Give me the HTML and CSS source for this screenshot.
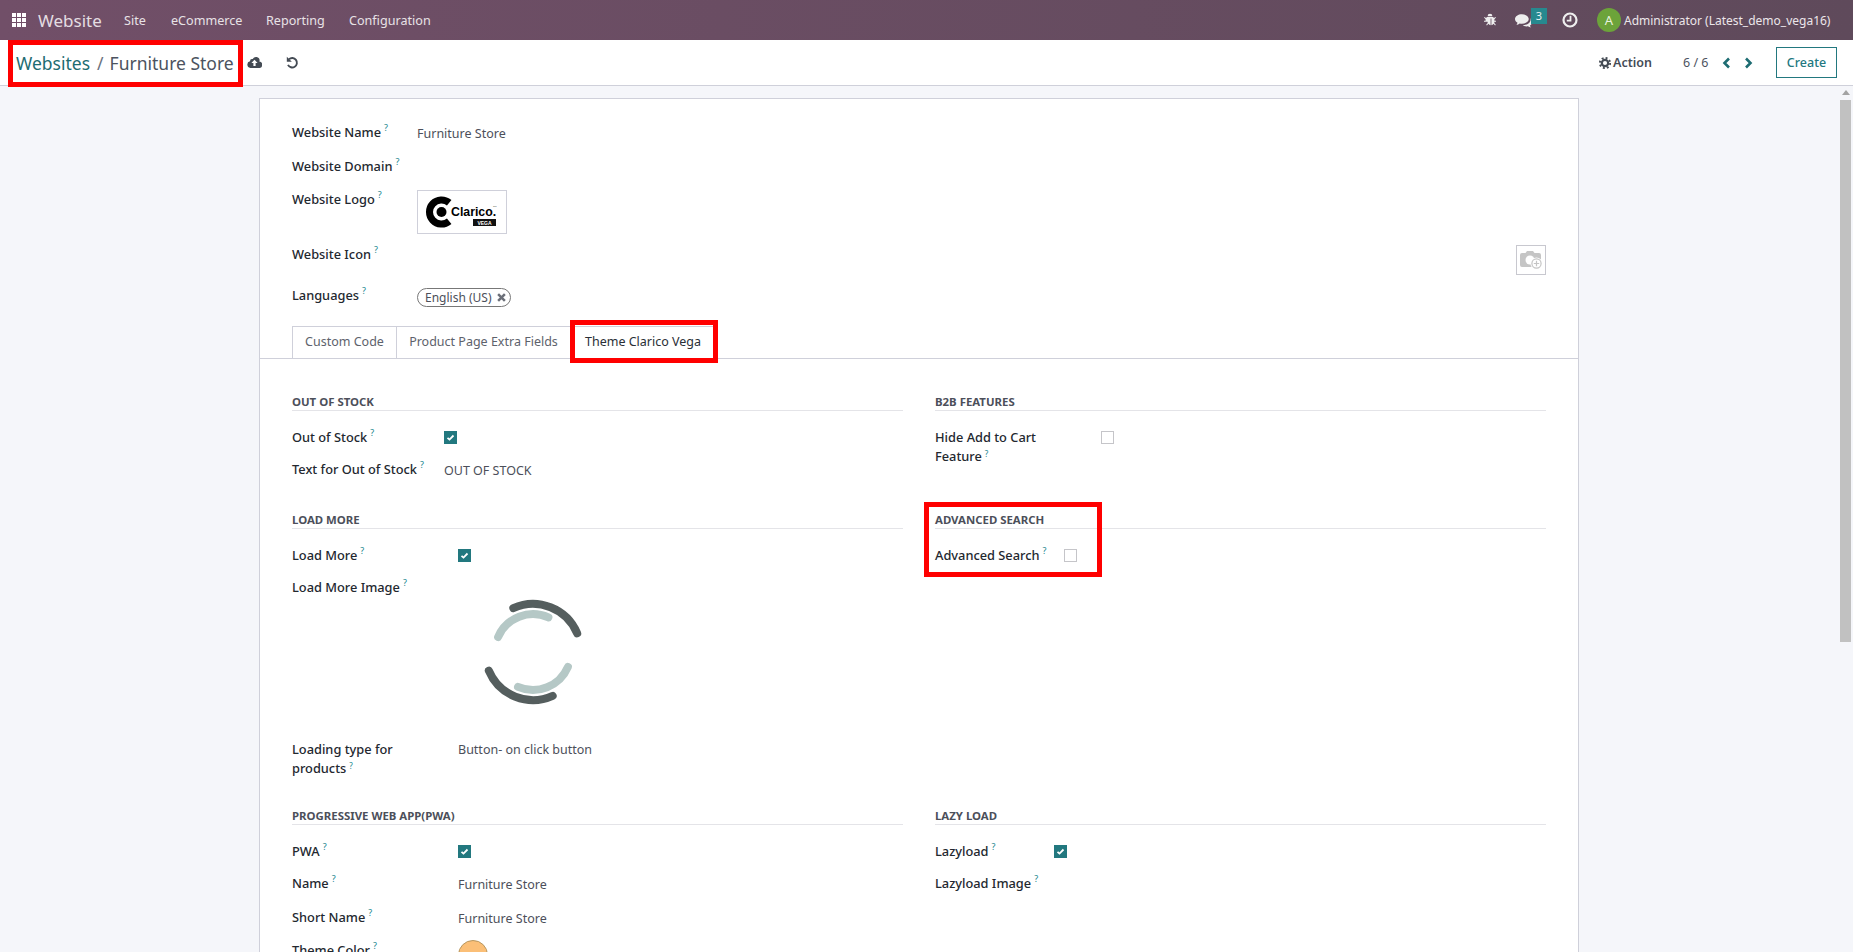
FILE: index.html
```html
<!DOCTYPE html>
<html lang="en">
<head>
<meta charset="utf-8">
<title>Website</title>
<link rel="stylesheet" href="styles.css">
</head>
<body>
<header class="nav">
  <div class="nav-left">
    <svg class="apps" viewBox="0 0 14 14"><g fill="#fff"><rect width="4" height="4"/><rect x="5" width="4" height="4"/><rect x="10" width="4" height="4"/><rect y="5" width="4" height="4"/><rect x="5" y="5" width="4" height="4"/><rect x="10" y="5" width="4" height="4"/><rect y="10" width="4" height="4"/><rect x="5" y="10" width="4" height="4"/><rect x="10" y="10" width="4" height="4"/></g></svg>
    <span class="brand">Website</span>
    <span class="menu m1">Site</span>
    <span class="menu m2">eCommerce</span>
    <span class="menu m3">Reporting</span>
    <span class="menu m4">Configuration</span>
  </div>
  <div class="nav-right">
    <svg class="bug" viewBox="0 0 12 14"><path fill="#eee" d="M3.6 3.2a2.4 2.4 0 0 1 4.8 0zM3 3.9h6l1 1.2 1.3-1.2.7.7-1.6 1.6v1.6H12v1h-1.6l-.1 1.2 1.5 1.7-.7.7-1.5-1.6c-.6.8-1.4 1.3-2.2 1.4V5.6h-.8v6.6c-.8-.1-1.6-.6-2.2-1.4l-1.5 1.6-.7-.7 1.5-1.7-.1-1.2H0v-1h1.6V6.2L0 4.6l.7-.7L2 5.1z"/></svg>
    <svg class="chat" viewBox="0 0 17 14"><path fill="#eee" d="M6.5 1C3 1 0 3 0 5.6c0 1.5 1 2.8 2.4 3.6-.2.7-.6 1.3-1 1.8 1 0 2.2-.6 3-1.2.7.1 1.4.2 2.1.2 3.6 0 6.5-2 6.5-4.4S10.100 1 6.500 1z"/><path fill="#eee" d="M14.500 4.600c.2.500.3 1 .3 1.500 0 3-3 5.100-6.800 5.100h-.7c.9.900 2.300 1.400 3.700 1.400.5 0 1 0 1.400-.1.700.5 1.700 1 2.600 1-.4-.4-.7-1-.9-1.500 1.100-.7 1.900-1.800 1.900-3 0-1.800-.6-3.300-1.500-4.400z"/></svg>
    <span class="badge">3</span>
    <svg class="clock" viewBox="0 0 16 16"><circle cx="8" cy="8" r="6.500" fill="none" stroke="#eee" stroke-width="2.200"/><path d="M8.500 3.800v4.900H4.800" fill="none" stroke="#eee" stroke-width="1.800"/></svg>
    <span class="avatar">A</span>
    <span class="user">Administrator (Latest_demo_vega16)</span>
  </div>
</header>

<section class="panel">
  <div class="crumbs">
    <span class="crumb-link">Websites</span><span class="crumb-sep">/</span><span class="crumb-cur">Furniture Store</span>
    <svg class="cloud" viewBox="0 0 15 11"><path fill="#444b54" d="M12.300 4.600A3.300 3.300 0 0 0 9 0a3.700 3.700 0 0 0-3.300 2A2.300 2.300 0 0 0 3 4.300 3.400 3.400 0 0 0 3.400 11h8.400a3.200 3.200 0 0 0 .5-6.400z"/><path fill="#fff" d="M7.500 2.800 10.600 6H8.600v3H6.400V6H4.400z"/></svg>
    <svg class="undo" viewBox="0 0 13 13"><path d="M3 3.300A4.700 4.700 0 1 1 2 8.800" fill="none" stroke="#444b54" stroke-width="1.900"/><path fill="#444b54" d="M.8.800v5h5z"/></svg>
  </div>
  <div class="panel-right">
    <svg class="gear" viewBox="0 0 14 14"><circle cx="7" cy="7" r="3.700" fill="none" stroke="#444b54" stroke-width="2.600"/><circle cx="7" cy="7" r="6" fill="none" stroke="#444b54" stroke-width="2.200" stroke-dasharray="2.300 2.410"/></svg>
    <span class="action">Action</span>
    <span class="pager">6 / 6</span>
    <svg class="chev c1" viewBox="0 0 9 12"><path d="M7 1.500 2.500 6 7 10.500" fill="none" stroke="#1d6c72" stroke-width="2.600"/></svg>
    <svg class="chev c2" viewBox="0 0 9 12"><path d="M2 1.500 6.500 6 2 10.500" fill="none" stroke="#1d6c72" stroke-width="2.600"/></svg>
    <span class="create">Create</span>
  </div>
</section>

<div class="body-row">
  <main class="content">
    <article class="sheet">
      <div class="head-form">
        <div class="lbl">Website Name<sup>?</sup></div><div class="val">Furniture Store</div>
        <div class="lbl">Website Domain<sup>?</sup></div><div></div>
        <div class="lbl">Website Logo<sup>?</sup></div>
        <div class="logo-box">
          <svg class="logo" viewBox="0 0 76 36">
            <path d="M25.200 8.800A12 12 0 1 0 25.200 27.200" fill="none" stroke="#000" stroke-width="7"/>
            <circle cx="17.500" cy="18" r="5" fill="#000"/>
            <text x="27" y="21.500" class="logo-text">Clarico.</text>
            <text x="69" y="13" class="logo-tm">TM</text>
            <rect x="49" y="25" width="23" height="7" fill="#111"/>
            <text x="60.500" y="30.700" text-anchor="middle" class="logo-vega">VEGA</text>
          </svg>
        </div>
        <div class="lbl">Website Icon<sup>?</sup></div>
        <div class="icon-cell">
          <span class="cam-box">
            <svg class="cam" viewBox="0 0 24 20"><path fill="#c5c5c5" d="M8 1h6l1.500 2H20a2 2 0 0 1 2 2v10a2 2 0 0 1-2 2H3a2 2 0 0 1-2-2V5a2 2 0 0 1 2-2h3.500z"/><circle cx="11" cy="10" r="4.500" fill="#fff"/><circle cx="17.500" cy="13.500" r="6" fill="#fff"/><circle cx="17.500" cy="13.500" r="4.600" fill="none" stroke="#c5c5c5" stroke-width="1.200"/><path d="M17.500 10.800v5.400M14.800 13.500h5.400" stroke="#c5c5c5" stroke-width="1.200"/></svg>
          </span>
        </div>
        <div class="lbl">Languages<sup>?</sup></div>
        <div><span class="tag">English (US)<svg class="tag-x" viewBox="0 0 8 8"><path d="M1 1l6 6M7 1 1 7" stroke="#6b6f78" stroke-width="2.200"/></svg></span></div>
      </div>

      <nav class="tabs">
        <span class="tab t1">Custom Code</span>
        <span class="tab t2">Product Page Extra Fields</span>
        <span class="tab t3">Theme Clarico Vega</span>
      </nav>

      <div class="groups">
        <section class="group g1">
          <h3>OUT OF STOCK</h3>
          <div class="form c152">
            <div class="lbl">Out of Stock<sup>?</sup></div><div class="cell"><span class="cb on"><svg viewBox="0 0 13 13"><path d="M3.500 6.800 5.500 8.600 9.500 4.500" fill="none" stroke="#fff" stroke-width="1.800"/></svg></span></div>
            <div class="lbl">Text for Out of Stock<sup>?</sup></div><div class="val">OUT OF STOCK</div>
          </div>
        </section>
        <section class="group g1">
          <h3>B2B FEATURES</h3>
          <div class="form c166">
            <div class="lbl lbl-wrap lbl-narrow">Hide Add to Cart Feature<sup>?</sup></div><div class="cell"><span class="cb"></span></div>
          </div>
        </section>

        <section class="group g2">
          <h3>LOAD MORE</h3>
          <div class="form c166">
            <div class="lbl">Load More<sup>?</sup></div><div class="cell"><span class="cb on"><svg viewBox="0 0 13 13"><path d="M3.500 6.800 5.500 8.600 9.500 4.500" fill="none" stroke="#fff" stroke-width="1.800"/></svg></span></div>
            <div class="lbl">Load More Image<sup>?</sup></div>
            <div class="spin-cell">
              <svg class="spin" viewBox="0 0 150 150">
                <g fill="none" stroke-width="8" stroke-linecap="round">
                  <path stroke="#b5c8c6" d="M40.100 60A38 38 0 0 1 90.400 40.300"/>
                  <path stroke="#b5c8c6" d="M109.900 90A38 38 0 0 1 60 109.900"/>
                  <path stroke="#555e5e" d="M55.300 31.200A48 48 0 0 1 119.200 56.400"/>
                  <path stroke="#555e5e" d="M30.800 93.600A48 48 0 0 0 94.700 118.800"/>
                </g>
              </svg>
            </div>
            <div class="lbl lbl-wrap lbl-narrow">Loading type for products<sup>?</sup></div><div class="val val-tight">Button- on click button</div>
          </div>
        </section>
        <section class="group g2">
          <h3>ADVANCED SEARCH</h3>
          <div class="form c129">
            <div class="lbl">Advanced Search<sup>?</sup></div><div class="cell"><span class="cb"></span></div>
          </div>
        </section>

        <section class="group">
          <h3>PROGRESSIVE WEB APP(PWA)</h3>
          <div class="form c166">
            <div class="lbl">PWA<sup>?</sup></div><div class="cell"><span class="cb on"><svg viewBox="0 0 13 13"><path d="M3.500 6.800 5.500 8.600 9.500 4.500" fill="none" stroke="#fff" stroke-width="1.800"/></svg></span></div>
            <div class="lbl">Name<sup>?</sup></div><div class="val">Furniture Store</div>
            <div class="lbl">Short Name<sup>?</sup></div><div class="val">Furniture Store</div>
            <div class="lbl">Theme Color<sup>?</sup></div><div><span class="swatch"></span></div>
          </div>
        </section>
        <section class="group">
          <h3>LAZY LOAD</h3>
          <div class="form c119">
            <div class="lbl">Lazyload<sup>?</sup></div><div class="cell"><span class="cb on"><svg viewBox="0 0 13 13"><path d="M3.500 6.800 5.500 8.600 9.500 4.500" fill="none" stroke="#fff" stroke-width="1.800"/></svg></span></div>
            <div class="lbl">Lazyload Image<sup>?</sup></div><div></div>
          </div>
        </section>
      </div>
    </article>
  </main>
  <aside class="scroll"><span class="arrow"></span><span class="thumb"></span></aside>
</div>

<div class="mark mark-crumb"></div>
<div class="mark mark-tab"></div>
<div class="mark mark-search"></div>
</body>
</html>
```
FILE: styles.css
```css
* { box-sizing: border-box; }
html, body { margin: 0; height: 100%; }
body {
  width: 1853px; height: 952px; overflow: hidden; position: relative;
  font-family: "Noto Sans", "Open Sans", sans-serif; font-size: 12.500px; color: #4c4f5a;
  background: #f5f6fa; display: flex; flex-direction: column;
}
.nav {
  height: 40px; flex: none; display: flex; justify-content: space-between; align-items: center;
  background: linear-gradient(90deg, #714f68, #5f4a5b); color: #ece6ea; position: relative;
}
.nav-left { display: flex; align-items: center; }
.apps { width: 14px; height: 14px; margin-left: 12px; }
.brand { font-size: 17px; margin-left: 12px; width: 86px; color: #e4dde2; }
.menu { font-size: 12.600px; color: #e8e2e6; }
.m1 { width: 47px; } .m2 { width: 95px; } .m3 { width: 83px; }
.nav-right { display: flex; align-items: center; }
.bug { width: 12px; height: 14px; margin-right: 18px; }
.chat { width: 18px; height: 15px; margin-left: 1px; }
.badge { width: 16px; height: 16px; background: #27898f; color: #e8f2f2; font-size: 11px; line-height: 15px; text-align: center; align-self: flex-start; margin: 0 0 0 -2px; }
.clock { width: 16px; height: 16px; margin: 0 19px 0 15px; }
.avatar { width: 24px; height: 24px; border-radius: 50%; background: #6ca33a; color: #e9f2df; text-align: center; line-height: 24px; font-size: 13px; }
.user { margin: 0 10px 0 3px; font-size: 12px; width: 219px; white-space: nowrap; }

.panel {
  height: 46px; flex: none; background: #fff; border-bottom: 1px solid #cfd0da;
  display: flex; justify-content: space-between; align-items: center;
}
.crumbs { display: flex; align-items: center; padding-left: 16px; font-size: 17.500px; white-space: nowrap; }
.crumb-link { color: #1d6c72; }
.crumb-sep { margin: 0 6px 0 7px; color: #6b7280; }
.crumb-cur { color: #4c5360; }
.cloud { width: 15px; height: 11px; margin-left: 13px; }
.undo { width: 13px; height: 13px; margin-left: 24px; }
.panel-right { display: flex; align-items: center; padding-right: 16px; }
.gear { width: 12px; height: 12px; }
.action { font-weight: 600; margin-left: 2px; width: 70px; color: #454c56; }
.pager { width: 39px; color: #4c5360; }
.chev { width: 9px; height: 12px; }
.c1 { margin-right: 13px; }
.c2 { margin-right: 23px; }
.create { width: 61px; height: 31px; border: 1px solid #22787f; color: #22787f; text-align: center; line-height: 29px; font-weight: 500; }

.body-row { flex: 1; min-height: 0; display: flex; }
.content { flex: 1; min-width: 0; overflow: hidden; padding: 12px 0 0 259px; }
.sheet { width: 1320px; height: 1200px; background: #fff; border: 1px solid #cfd0da; padding-top: 23px; }
.scroll { width: 15px; flex: none; display: flex; flex-direction: column; align-items: center; padding: 4px 0 0; }
.arrow { width: 0; height: 0; border: 4px solid transparent; border-top: 0; border-bottom: 5px solid #a3a3a3; }
.thumb { width: 11px; height: 542px; background: #c1c1c1; margin-top: 5px; }

.head-form { display: grid; grid-template-columns: 125px 1fr; grid-template-rows: 34px 33px 55px 41px 41px; padding: 0 32px; }
.lbl { font-weight: 500; font-size: 12.800px; color: #23282f; line-height: 20px; white-space: nowrap; }
.lbl-wrap { white-space: normal; line-height: 19px; padding-top: 1px; }
.lbl-wrap sup { font-size: 8px; vertical-align: 4px; }
.lbl-narrow { width: 120px; }
sup { font-size: 9px; color: #17858e; margin-left: 3px; line-height: 0; font-weight: 400; vertical-align: 6px; }
.val { line-height: 24px; color: #4c4f5a; }
.val-tight { line-height: 22px; }
.logo-box { width: 90px; height: 44px; border: 1px solid #cfd0da; margin-top: 1px; display: flex; align-items: center; justify-content: center; }
.logo { width: 76px; height: 36px; display: block; }
.logo-text { font-family: "Liberation Sans", sans-serif; font-weight: 700; font-size: 12.300px; fill: #000; }
.logo-tm { font-family: "Liberation Sans", sans-serif; font-size: 2.500px; fill: #333; }
.logo-vega { font-family: "Liberation Sans", sans-serif; font-weight: 700; font-size: 5px; fill: #fff; }
.icon-cell { display: flex; justify-content: flex-end; align-items: flex-start; }
.cam-box { width: 30px; height: 30px; border: 1px solid #c8c8cf; display: flex; align-items: center; justify-content: center; margin-top: 1px; }
.cam { width: 24px; height: 20px; }
.tag { display: inline-flex; align-items: center; height: 19px; margin-top: 3px; padding: 0 7px; border: 1px solid #777; border-radius: 10px; width: 94px; white-space: nowrap; font-size: 12px; }
.tag-x { width: 9px; height: 9px; margin-left: 5px; flex: none; }

.tabs { display: flex; height: 33px; margin-top: 0; padding-left: 32px; border-bottom: 1px solid #cfd0da; }
.tab { height: 33px; line-height: 30px; text-align: center; border: 1px solid #cfd0da; border-bottom: 0; border-right: 0; color: #5d626c; white-space: nowrap; }
.t1 { width: 104px; }
.t2 { width: 174px; }
.t3 { width: 148px; color: #2a2f36; background: #fff; border-bottom: 1px solid #fff; height: 34px; padding-right: 3px; }

.groups { display: grid; grid-template-columns: 611px 611px; column-gap: 32px; padding: 33px 32px 0; }
.group h3 { margin: 0 0 16px; height: 19px; font-size: 11.400px; line-height: 20px; font-weight: 700; color: #4c4f5a; border-bottom: 1px solid #e4e4e8; white-space: nowrap; }
.g1 { height: 118px; }
.g2 { height: 296px; }
.form { display: grid; grid-auto-rows: 32px; }
.c152 { grid-template-columns: 152px 1fr; }
.c166 { grid-template-columns: 166px 1fr; }
.c129 { grid-template-columns: 129px 1fr; }
.c119 { grid-template-columns: 119px 1fr; }
.g2 .form.c166 { grid-template-rows: 32px 162px 40px; }
.group:not(.g1):not(.g2) .form.c166 { grid-template-rows: 32px 34px 33px 40px; }
.cell { padding-top: 4px; }
.cb { display: block; width: 13px; height: 13px; border: 1px solid #c5c5c9; background: #fff; }
.cb.on { background: #22787f; border: 0; }
.cb svg { display: block; width: 13px; height: 13px; }
.spin-cell { height: 162px; }
.spin { width: 150px; height: 150px; display: block; }
.swatch { display: block; width: 30px; height: 30px; border-radius: 50%; background: #fbbf77; border: 1px solid #b8975f; }

.mark { position: absolute; border: 5px solid #f00; }
.mark-crumb { left: 8px; top: 40px; width: 235px; height: 47px; }
.mark-tab { left: 570px; top: 320px; width: 148px; height: 43px; }
.mark-search { left: 924px; top: 502px; width: 178px; height: 75px; }
```
